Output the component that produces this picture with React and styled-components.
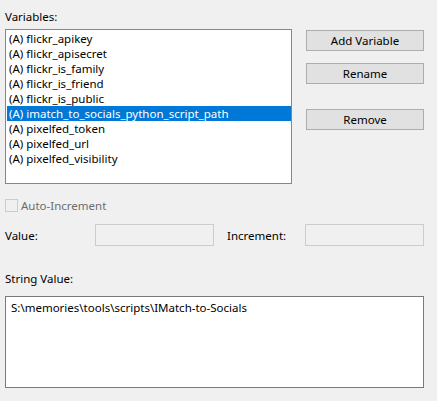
import React, { useState } from "react";
import styled, { createGlobalStyle } from "styled-components";

const variables = [
  "flickr_apikey",
  "flickr_apisecret",
  "flickr_is_family",
  "flickr_is_friend",
  "flickr_is_public",
  "imatch_to_socials_python_script_path",
  "pixelfed_token",
  "pixelfed_url",
  "pixelfed_visibility",
];

export default function App() {
  const [selected, setSelected] = useState(5);

  return (
    <>
      <GlobalStyle />
      <Page>
        <Label>Variables:</Label>
        <TopRow>
          <ListBox>
            {variables.map((name, i) => (
              <ListItem
                key={name}
                $selected={i === selected}
                onClick={() => setSelected(i)}
              >
                (A) {name}
              </ListItem>
            ))}
          </ListBox>
          <ButtonColumn>
            <Button>Add Variable</Button>
            <Button>Rename</Button>
            <Button $gap={25}>Remove</Button>
          </ButtonColumn>
        </TopRow>

        <CheckRow>
          <CheckBox />
          <CheckLabel>Auto-Increment</CheckLabel>
        </CheckRow>

        <FieldRow>
          <FieldLabel $width={90}>Value:</FieldLabel>
          <DisabledInput />
          <FieldLabel $width={78} $indent={13}>
            Increment:
          </FieldLabel>
          <DisabledInput />
        </FieldRow>

        <StringLabel>String Value:</StringLabel>
        <TextBox>S:\memories\tools\scripts\IMatch-to-Socials</TextBox>
      </Page>
    </>
  );
}

const GlobalStyle = createGlobalStyle`
  body {
    margin: 0;
    background: #f0f0f0;
    font-family: "Noto Sans", "Liberation Sans", sans-serif;
    font-size: 11.5px;
    color: #000;
  }
`;

const Page = styled.div`
  width: 437px;
  height: 401px;
  box-sizing: border-box;
  padding: 9px 13px 0 5px;
  display: flex;
  flex-direction: column;
`;

const Label = styled.div`
  line-height: 15px;
  height: 15px;
  margin-bottom: 5px;
`;

const TopRow = styled.div`
  display: flex;
  align-items: flex-start;
`;

const ListBox = styled.div`
  width: 287px;
  height: 155px;
  box-sizing: border-box;
  border: 1px solid #828790;
  background: #fff;
  padding: 1px 0 0 1px;
`;

const ListItem = styled.div`
  height: 15px;
  line-height: 15px;
  padding-left: 2px;
  white-space: nowrap;
  cursor: default;
  background: ${(p) => (p.$selected ? "#0078d7" : "transparent")};
  color: ${(p) => (p.$selected ? "#fff" : "#000")};
`;

const ButtonColumn = styled.div`
  display: flex;
  flex-direction: column;
  margin-left: 14px;
  padding-top: 1px;
  gap: 12px;
`;

const Button = styled.button`
  width: 118px;
  height: 21px;
  box-sizing: border-box;
  margin: 0;
  margin-top: ${(p) => (p.$gap ? p.$gap - 12 : 0)}px;
  padding: 0;
  border: 1px solid #adadad;
  background: #e1e1e1;
  font-family: inherit;
  font-size: 11.5px;
  color: #000;
`;

const CheckRow = styled.div`
  display: flex;
  align-items: center;
  margin-top: 15px;
  height: 13px;
`;

const CheckBox = styled.span`
  width: 13px;
  height: 13px;
  box-sizing: border-box;
  border: 1px solid #cccccc;
  background: #f0f0f0;
`;

const CheckLabel = styled.span`
  margin-left: 3px;
  color: #6d6d6d;
  line-height: 15px;
`;

const FieldRow = styled.div`
  display: flex;
  align-items: center;
  margin-top: 12px;
`;

const FieldLabel = styled.span`
  width: ${(p) => p.$width}px;
  margin-left: ${(p) => p.$indent || 0}px;
  line-height: 15px;
`;

const DisabledInput = styled.div`
  width: 119px;
  height: 22px;
  box-sizing: border-box;
  border: 1px solid #cccccc;
  background: #f0f0f0;
`;

const StringLabel = styled.div`
  margin-top: 25px;
  line-height: 15px;
  height: 15px;
`;

const TextBox = styled.div`
  margin-top: 10px;
  width: 419px;
  height: 92px;
  box-sizing: border-box;
  border: 1px solid #7a7a7a;
  background: #fff;
  padding: 3px 5px;
  line-height: 15px;
`;
